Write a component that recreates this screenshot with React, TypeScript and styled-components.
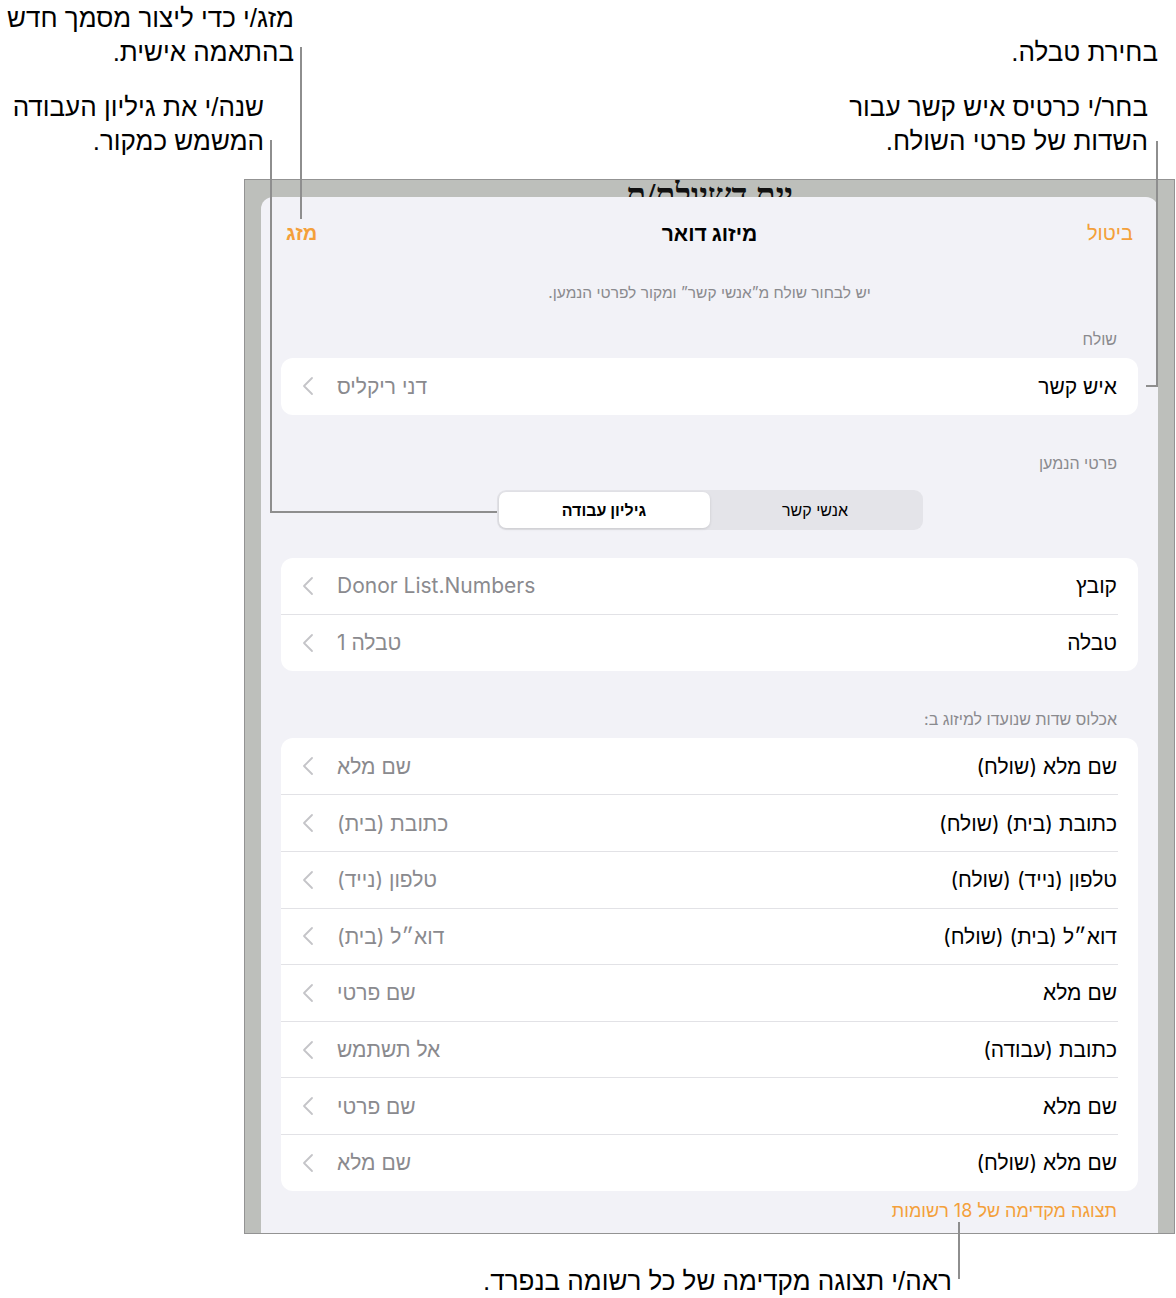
import React from "react";
import styled, { createGlobalStyle } from "styled-components";

const Global = createGlobalStyle`
  html, body { margin: 0; padding: 0; background: #fff; }
  body { font-family: "Liberation Sans", Arial, sans-serif; }
`;

const uiFont = `Inter, "Liberation Sans", Arial, sans-serif`;

const Page = styled.div`
  position: relative;
  width: 1176px;
  height: 1298px;
  box-sizing: border-box;
  padding: 179px 1px 0 244px;
  background: #fff;
`;

const Frame = styled.div`
  width: 931px;
  height: 1055px;
  box-sizing: border-box;
  border: 1px solid #939393;
  background: #bdbfbb;
  padding: 0 16px;
  display: flex;
  flex-direction: column;
  overflow: hidden;
`;

const BackTitle = styled.div`
  height: 17px;
  overflow: hidden;
  direction: rtl;
  text-align: center;
  font-family: "Liberation Serif", "DejaVu Serif", serif;
  font-weight: 700;
  font-size: 33px;
  line-height: 30px;
  color: #111;
`;

const Sheet = styled.div`
  flex: 1;
  direction: rtl;
  background: #f2f2f7;
  border-radius: 12px 12px 0 0;
  padding: 0 20px;
  display: flex;
  flex-direction: column;
  font-family: ${uiFont};
`;

const Header = styled.div`
  height: 72px;
  padding: 0 5px;
  display: grid;
  grid-template-columns: 1fr auto 1fr;
  align-items: center;
`;

const HeaderButton = styled.span<{ $bold?: boolean; $end?: boolean }>`
  color: #f4a03a;
  font-size: 20px;
  font-weight: ${(p) => (p.$bold ? 700 : 400)};
  justify-self: ${(p) => (p.$end ? "end" : "start")};
`;

const HeaderTitle = styled.span`
  font-size: 21px;
  font-weight: 700;
  color: #000;
`;

const Subtitle = styled.div`
  margin-top: 14px;
  text-align: center;
  font-size: 15.5px;
  line-height: 20px;
  color: #8a8a8e;
`;

const SectionLabel = styled.div<{ $gap: number }>`
  margin-top: ${(p) => p.$gap}px;
  padding-right: 21px;
  font-size: 16px;
  line-height: 18px;
  color: #8a8a8e;
`;

const Card = styled.div<{ $gap: number }>`
  margin-top: ${(p) => p.$gap}px;
  background: #fff;
  border-radius: 12px;
  overflow: hidden;
`;

const Row = styled.div`
  display: flex;
  padding-right: 20px;
  & + & > div {
    border-top: 1px solid #e2e2e6;
  }
`;

const RowInner = styled.div`
  flex: 1;
  height: 56.6px;
  display: flex;
  align-items: center;
  padding: 0 1px 0 21px;
  box-sizing: border-box;
`;

const RowTitle = styled.span`
  flex: 1;
  font-size: 21px;
  color: #000;
  white-space: nowrap;
`;

const RowValue = styled.span`
  font-size: 21px;
  color: #8a8a8e;
  white-space: nowrap;
  margin-left: 23px;
`;

const Chevron = styled.svg`
  width: 12px;
  height: 20px;
  flex: none;
`;

const Segmented = styled.div`
  margin-top: 18px;
  align-self: center;
  width: 426px;
  height: 40px;
  box-sizing: border-box;
  padding: 2px;
  border-radius: 9px;
  background: #e4e4e9;
  display: flex;
`;

const Segment = styled.div<{ $active?: boolean }>`
  flex: 1;
  display: flex;
  align-items: center;
  justify-content: center;
  border-radius: 7px;
  font-size: 16px;
  font-weight: ${(p) => (p.$active ? 700 : 400)};
  color: #000;
  background: ${(p) => (p.$active ? "#fff" : "transparent")};
  box-shadow: ${(p) => (p.$active ? "0 1px 3px rgba(0,0,0,0.12)" : "none")};
`;

const PreviewLink = styled.div`
  margin-top: 9px;
  padding-right: 21px;
  font-size: 18px;
  line-height: 22px;
  color: #f4a03a;
`;

const Callout = styled.div<{ $top: number; $right: number }>`
  position: absolute;
  top: ${(p) => p.$top}px;
  right: ${(p) => p.$right}px;
  direction: rtl;
  text-align: right;
  white-space: nowrap;
  font-family: "Liberation Sans", Arial, sans-serif;
  font-size: 26px;
  line-height: 34px;
  color: #000;
`;

const Leaders = styled.svg`
  position: absolute;
  left: 0;
  top: 0;
  width: 1176px;
  height: 1298px;
  pointer-events: none;
`;

const ChevronIcon = () => (
  <Chevron viewBox="0 0 12 20">
    <polyline points="10,2 2,10 10,18" fill="none" stroke="#c4c4c8" strokeWidth="1.8" strokeLinecap="round" strokeLinejoin="round" />
  </Chevron>
);

type Item = { title: string; value: string };

const ListRow = ({ title, value }: Item) => (
  <Row>
    <RowInner>
      <RowTitle>{title}</RowTitle>
      <RowValue>{value}</RowValue>
      <ChevronIcon />
    </RowInner>
  </Row>
);

const sourceRows: Item[] = [
  { title: "קובץ", value: "Donor List.Numbers" },
  { title: "טבלה", value: "טבלה 1" },
];

const fieldRows: Item[] = [
  { title: "שם מלא (שולח)", value: "שם מלא" },
  { title: "כתובת (בית) (שולח)", value: "כתובת (בית)" },
  { title: "טלפון (נייד) (שולח)", value: "טלפון (נייד)" },
  { title: "דוא״ל (בית) (שולח)", value: "דוא״ל (בית)" },
  { title: "שם מלא", value: "שם פרטי" },
  { title: "כתובת (עבודה)", value: "אל תשתמש" },
  { title: "שם מלא", value: "שם פרטי" },
  { title: "שם מלא (שולח)", value: "שם מלא" },
];

export default function App() {
  return (
    <Page>
      <Global />
      <Frame>
        <BackTitle>יית דשיולת/ת</BackTitle>
        <Sheet>
          <Header>
            <HeaderButton>ביטול</HeaderButton>
            <HeaderTitle>מיזוג דואר</HeaderTitle>
            <HeaderButton $bold $end>מזג</HeaderButton>
          </Header>
          <Subtitle>יש לבחור שולח מ”אנשי קשר” ומקור לפרטי הנמען.</Subtitle>
          <SectionLabel $gap={27}>שולח</SectionLabel>
          <Card $gap={10}>
            <ListRow title="איש קשר" value="דני ריקליס" />
          </Card>
          <SectionLabel $gap={39}>פרטי הנמען</SectionLabel>
          <Segmented>
            <Segment>אנשי קשר</Segment>
            <Segment $active>גיליון עבודה</Segment>
          </Segmented>
          <Card $gap={28}>
            {sourceRows.map((r, i) => (
              <ListRow key={i} {...r} />
            ))}
          </Card>
          <SectionLabel $gap={39}>אכלוס שדות שנועדו למיזוג ב:</SectionLabel>
          <Card $gap={10}>
            {fieldRows.map((r, i) => (
              <ListRow key={i} {...r} />
            ))}
          </Card>
          <PreviewLink>תצוגה מקדימה של 18 רשומות</PreviewLink>
        </Sheet>
      </Frame>

      <Callout $top={1} $right={882}>
        מזג/י כדי ליצור מסמך חדש
        <br />
        בהתאמה אישית.
      </Callout>
      <Callout $top={90} $right={912}>
        שנה/י את גיליון העבודה
        <br />
        המשמש כמקור.
      </Callout>
      <Callout $top={35} $right={18}>
        בחירת טבלה.
      </Callout>
      <Callout $top={90} $right={28}>
        בחר/י כרטיס איש קשר עבור
        <br />
        השדות של פרטי השולח.
      </Callout>
      <Callout $top={1264} $right={224}>
        ראה/י תצוגה מקדימה של כל רשומה בנפרד.
      </Callout>

      <Leaders viewBox="0 0 1176 1298">
        <g fill="none" stroke="#8e8e8e" strokeWidth="2">
          <path d="M301 47 V219" />
          <path d="M271 140 V512 H497" />
          <path d="M1157 141 V386 H1146" />
          <path d="M959 1222 V1279" />
        </g>
      </Leaders>
    </Page>
  );
}
